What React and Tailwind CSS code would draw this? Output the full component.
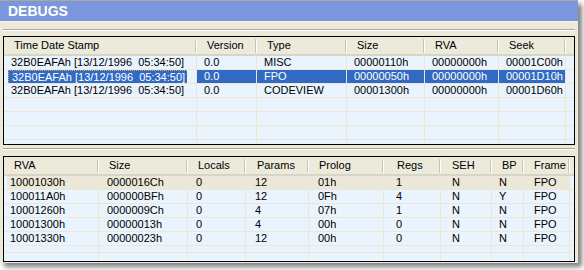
import React from 'react'

const FONT = "font-['Liberation_Sans',Arial,sans-serif]"

const DEBUG_COLS = [
  { label: 'Time Date Stamp', w: 193, hp: 10, dp: 7 },
  { label: 'Version', w: 60, hp: 10, dp: 7 },
  { label: 'Type', w: 90, hp: 10, dp: 7 },
  { label: 'Size', w: 78, hp: 10, dp: 7 },
  { label: 'RVA', w: 74, hp: 10, dp: 7 },
  { label: 'Seek', w: 67, hp: 10, dp: 7 },
]

const DEBUG_ROWS = [
  ['32B0EAFAh [13/12/1996  05:34:50]', '0.0', 'MISC', '00000110h', '00000000h', '00001C00h'],
  ['32B0EAFAh [13/12/1996  05:34:50]', '0.0', 'FPO', '00000050h', '00000000h', '00001D10h'],
  ['32B0EAFAh [13/12/1996  05:34:50]', '0.0', 'CODEVIEW', '00001300h', '00000000h', '00001D60h'],
]

const FPO_COLS = [
  { label: 'RVA', w: 95, hp: 10, dp: 6 },
  { label: 'Size', w: 89, hp: 10, dp: 8 },
  { label: 'Locals', w: 58, hp: 10, dp: 8 },
  { label: 'Params', w: 63, hp: 11, dp: 9 },
  { label: 'Prolog', w: 75, hp: 10, dp: 9 },
  { label: 'Regs', w: 57, hp: 13, dp: 12 },
  { label: 'SEH', w: 51, hp: 11, dp: 11 },
  { label: 'BP', w: 32, hp: 10, dp: 7 },
  { label: 'Frame', w: 46, hp: 10, dp: 10 },
]

const FPO_ROWS = [
  ['10001030h', '0000016Ch', '0', '12', '01h', '1', 'N', 'N', 'FPO'],
  ['100011A0h', '000000BFh', '0', '12', '0Fh', '4', 'N', 'Y', 'FPO'],
  ['10001260h', '0000009Ch', '0', '4', '07h', '1', 'N', 'N', 'FPO'],
  ['10001300h', '00000013h', '0', '4', '00h', '0', 'N', 'N', 'FPO'],
  ['10001330h', '00000023h', '0', '12', '00h', '0', 'N', 'N', 'FPO'],
]

function Header({ cols }) {
  return (
    <div className="flex h-[19px] shrink-0 bg-[#ebeadb] border-b-2 border-[#d9d5c4]">
      {cols.map((c) => (
        <div key={c.label} className="flex items-center shrink-0" style={{ width: c.w }}>
          <span className="flex-1 whitespace-pre" style={{ paddingLeft: c.hp }}>{c.label}</span>
          <div className="w-[2px] h-[14px] border-l border-[#c7c4b3] border-r border-r-white" />
        </div>
      ))}
      <div className="flex-1" />
    </div>
  )
}

function Row({ cols, cells, mode, h = 14 }) {
  const sel = mode === 'sel'
  return (
    <div className="flex shrink-0 border-b border-[#ede8d3]" style={{ height: h }}>
      {cols.map((c, i) => (
        <div
          key={c.label}
          className="flex items-center shrink-0 border-r border-[#ede8d3] whitespace-pre"
          style={{ width: c.w }}
        >
          {sel && i === 0 ? (
            <span className="ml-[4px] w-[179px] h-full flex items-center bg-[#316ac5] text-white pl-[3px] border-l border-t border-dotted border-[#d9a766]">
              {cells[i]}
            </span>
          ) : (
            <span
              className={'h-full w-full flex items-center ' + (sel ? 'bg-[#316ac5] text-white' : '')}
              style={{ paddingLeft: c.dp }}
            >
              {cells ? cells[i] : ''}
            </span>
          )}
        </div>
      ))}
      <div className="flex-1" />
    </div>
  )
}

function FocusRow({ cols, cells }) {
  return (
    <div className="flex shrink-0 h-[14px] border-b border-[#ede8d3]">
      <div className="flex w-[566px] shrink-0">
        <div className="w-[3px] shrink-0" />
        <div className="flex flex-1 bg-[#ebe8d9]">
          {cols.map((c, i) => (
            <div
              key={c.label}
              className="flex items-center shrink-0 whitespace-pre"
              style={{ width: i === 0 ? c.w - 3 : c.w, paddingLeft: i === 0 ? c.dp - 3 : c.dp }}
            >
              {cells[i]}
            </div>
          ))}
        </div>
      </div>
      <div className="flex-1" />
    </div>
  )
}

function Filler({ cols }) {
  return (
    <div className="flex flex-1">
      {cols.map((c) => (
        <div key={c.label} className="shrink-0 border-r border-[#ede8d3]" style={{ width: c.w }} />
      ))}
    </div>
  )
}

function Separator() {
  return <div className="mx-[3px] h-[2px] border-t border-[#aca899] border-b border-b-white" />
}

export default function App() {
  return (
    <div className={`w-[584px] h-[270px] bg-white overflow-hidden text-[11px] text-black ${FONT}`}>
      <div className="w-[578px] h-[263px] flex flex-col bg-[#ece9d8] border-t border-[#a9a7a0] shadow-[4px_4px_5px_rgba(0,0,0,0.5)]">
        <div className="h-[20px] shrink-0 bg-[#7a96dd] flex items-center pl-[8px] text-white font-bold text-[14px]">
          DEBUGS
        </div>
        <div className="h-px bg-[#f7f5ec]" />

        <div className="h-[7px]" />
        <Separator />
        <div className="h-[5px]" />

        <div className="mx-[3px] h-[109px] flex flex-col border border-black bg-[#eaf4fe] overflow-hidden">
          <Header cols={DEBUG_COLS} />
          <div className="flex flex-col flex-1 overflow-hidden">
            <Row cols={DEBUG_COLS} cells={DEBUG_ROWS[0]} />
            <Row cols={DEBUG_COLS} cells={DEBUG_ROWS[1]} mode="sel" />
            <Row cols={DEBUG_COLS} cells={DEBUG_ROWS[2]} />
            <Row cols={DEBUG_COLS} />
            <Row cols={DEBUG_COLS} />
            <Row cols={DEBUG_COLS} />
            <Row cols={DEBUG_COLS} />
          </div>
        </div>

        <div className="h-[3px]" />
        <Separator />
        <div className="h-[6px]" />

        <div className="mx-[3px] h-[106px] flex flex-col border border-black bg-[#eaf4fe] overflow-hidden">
          <Header cols={FPO_COLS} />
          <div className="flex flex-col flex-1 overflow-hidden">
            <FocusRow cols={FPO_COLS} cells={FPO_ROWS[0]} />
            {FPO_ROWS.slice(1).map((r) => (
              <Row key={r[0]} cols={FPO_COLS} cells={r} />
            ))}
            <Row cols={FPO_COLS} h={7} />
            <Filler cols={FPO_COLS} />
          </div>
        </div>
      </div>
    </div>
  )
}
